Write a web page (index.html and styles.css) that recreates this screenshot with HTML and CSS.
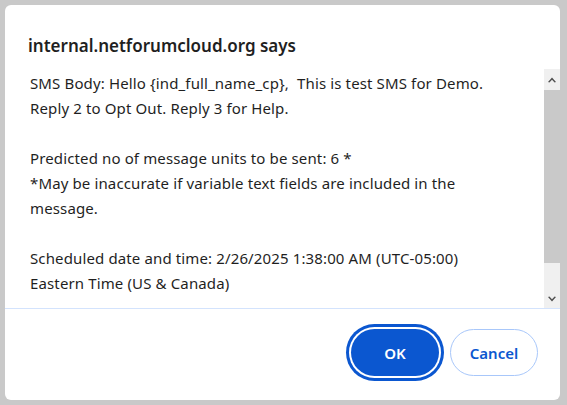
FILE: index.html
```html
<!DOCTYPE html>
<html lang="en">
<head>
    <meta charset="UTF-8">
    <title>internal.netforumcloud.org says</title>
    <link rel="stylesheet" href="styles.css">
</head>
<body>
    <div class="dialog">
        <h1 class="dialog-title">internal.netforumcloud.org says</h1>

        <div class="dialog-body">
            <div class="message">
                <p>SMS Body: Hello {ind_full_name_cp},&nbsp; This is test SMS for Demo.<br>Reply 2 to Opt Out. Reply 3 for Help.</p>
                <p>Predicted no of message units to be sent: 6 *<br>*May be inaccurate if variable text fields are included in the<br>message.</p>
                <p>Scheduled date and time: 2/26/2025 1:38:00 AM (UTC-05:00)<br>Eastern Time (US &amp; Canada)</p>
            </div>
            <div class="scrollbar">
                <div class="scroll-btn up">
                    <svg width="8" height="6" viewBox="0 0 8 6"><path d="M0 5 L4 0.5 L8 5 L6.6 5.6 L4 2.8 L1.4 5.6 Z" fill="#505050"/></svg>
                </div>
                <div class="scroll-thumb"></div>
                <div class="scroll-track"></div>
                <div class="scroll-btn down">
                    <svg width="8" height="6" viewBox="0 0 8 6"><path d="M0 1 L4 5.5 L8 1 L6.6 0.4 L4 3.2 L1.4 0.4 Z" fill="#505050"/></svg>
                </div>
            </div>
        </div>

        <div class="dialog-footer">
            <button class="btn btn-ok">OK</button>
            <button class="btn btn-cancel">Cancel</button>
        </div>
    </div>
</body>
</html>
```

FILE: styles.css
```css
:root {
    --blue: #0b57d0;
    --blue-light: #a8c7fa;
    --line: #d3e3fd;
    --text: #1f1f1f;
    --backdrop: #c9c9c9;
}

html, body {
    margin: 0;
    height: 100%;
}

body {
    background-color: var(--backdrop);
    font-family: 'Noto Sans', 'Open Sans', sans-serif;
    color: var(--text);
    padding: 5px 7px 5px 5px;
    box-sizing: border-box;
}

.dialog {
    background-color: #fff;
    border-radius: 6px;
    height: 395px;
    display: flex;
    flex-direction: column;
    overflow: hidden;
}

.dialog-title {
    margin: 0;
    height: 64px;
    box-sizing: border-box;
    padding: 30px 0 0 23px;
    font-size: 17px;
    font-weight: 600;
    line-height: 22px;
}

.dialog-body {
    display: flex;
    height: 239px;
    border-bottom: 1px solid var(--line);
}

.message {
    flex: 1;
    padding: 2px 0 0 25px;
    font-size: 15px;
    line-height: 25px;
    letter-spacing: 0.13px;
    overflow: hidden;
}

.message p {
    margin: 0 0 25px;
}

.scrollbar {
    width: 16px;
    display: flex;
    flex-direction: column;
    background-color: #f0f0f0;
}

.scroll-btn {
    display: flex;
    align-items: center;
    justify-content: center;
}

.scroll-btn.up {
    height: 21px;
}

.scroll-btn.down {
    height: 18px;
}

.scroll-thumb {
    height: 173px;
    background-color: var(--backdrop);
}

.scroll-track {
    flex: 1;
}

.dialog-footer {
    flex: 1;
    display: flex;
    justify-content: flex-end;
    align-items: flex-start;
    gap: 11px;
    padding: 20px 22px 0 0;
}

.btn {
    height: 47px;
    width: 88px;
    border-radius: 24px;
    font-family: inherit;
    font-size: 15px;
    font-weight: 600;
    cursor: pointer;
}

.btn-ok {
    background-color: var(--blue);
    color: #fff;
    border: none;
    box-shadow: 0 0 0 2px #fff, 0 0 0 5px var(--blue);
}

.btn-cancel {
    background-color: #fff;
    color: var(--blue);
    border: 1px solid var(--blue-light);
}
```
